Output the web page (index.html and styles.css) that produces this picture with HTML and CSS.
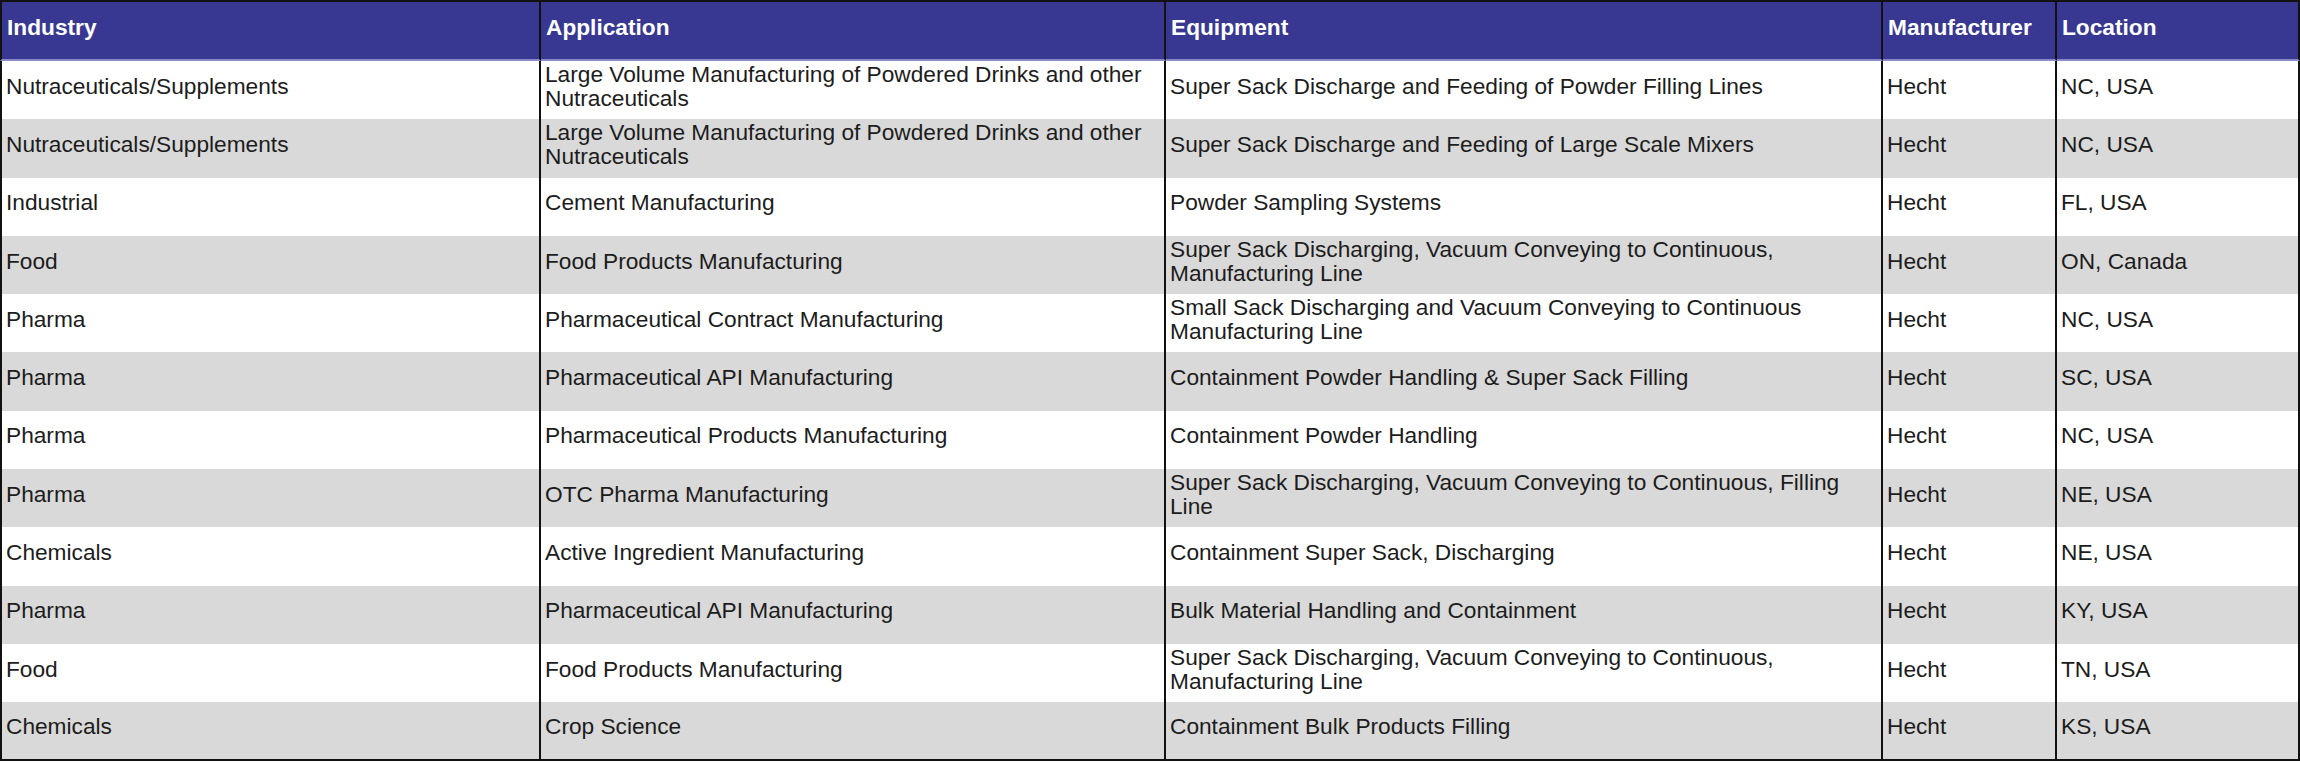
FILE: index.html
```html
<!DOCTYPE html>
<html lang="en">
<head>
<meta charset="utf-8">
<title>Hecht Installations</title>
<link rel="stylesheet" href="styles.css">
</head>
<body>
<table class="installs">
  <colgroup>
    <col class="c-industry">
    <col class="c-application">
    <col class="c-equipment">
    <col class="c-manufacturer">
    <col class="c-location">
  </colgroup>
  <thead>
    <tr>
      <th>Industry</th>
      <th>Application</th>
      <th>Equipment</th>
      <th>Manufacturer</th>
      <th>Location</th>
    </tr>
  </thead>
  <tbody>
    <tr>
      <td>Nutraceuticals/Supplements</td>
      <td>Large Volume Manufacturing of Powdered Drinks and other Nutraceuticals</td>
      <td>Super Sack Discharge and Feeding of Powder Filling Lines</td>
      <td>Hecht</td>
      <td>NC, USA</td>
    </tr>
    <tr>
      <td>Nutraceuticals/Supplements</td>
      <td>Large Volume Manufacturing of Powdered Drinks and other Nutraceuticals</td>
      <td>Super Sack Discharge and Feeding of Large Scale Mixers</td>
      <td>Hecht</td>
      <td>NC, USA</td>
    </tr>
    <tr>
      <td>Industrial</td>
      <td>Cement Manufacturing</td>
      <td>Powder Sampling Systems</td>
      <td>Hecht</td>
      <td>FL, USA</td>
    </tr>
    <tr>
      <td>Food</td>
      <td>Food Products Manufacturing</td>
      <td>Super Sack Discharging, Vacuum Conveying to Continuous, Manufacturing Line</td>
      <td>Hecht</td>
      <td>ON, Canada</td>
    </tr>
    <tr>
      <td>Pharma</td>
      <td>Pharmaceutical Contract Manufacturing</td>
      <td>Small Sack Discharging and Vacuum Conveying to Continuous Manufacturing Line</td>
      <td>Hecht</td>
      <td>NC, USA</td>
    </tr>
    <tr>
      <td>Pharma</td>
      <td>Pharmaceutical API Manufacturing</td>
      <td>Containment Powder Handling &amp; Super Sack Filling</td>
      <td>Hecht</td>
      <td>SC, USA</td>
    </tr>
    <tr>
      <td>Pharma</td>
      <td>Pharmaceutical Products Manufacturing</td>
      <td>Containment Powder Handling</td>
      <td>Hecht</td>
      <td>NC, USA</td>
    </tr>
    <tr>
      <td>Pharma</td>
      <td>OTC Pharma Manufacturing</td>
      <td>Super Sack Discharging, Vacuum Conveying to Continuous, Filling Line</td>
      <td>Hecht</td>
      <td>NE, USA</td>
    </tr>
    <tr>
      <td>Chemicals</td>
      <td>Active Ingredient Manufacturing</td>
      <td>Containment Super Sack, Discharging</td>
      <td>Hecht</td>
      <td>NE, USA</td>
    </tr>
    <tr>
      <td>Pharma</td>
      <td>Pharmaceutical API Manufacturing</td>
      <td>Bulk Material Handling and Containment</td>
      <td>Hecht</td>
      <td>KY, USA</td>
    </tr>
    <tr>
      <td>Food</td>
      <td>Food Products Manufacturing</td>
      <td>Super Sack Discharging, Vacuum Conveying to Continuous, Manufacturing Line</td>
      <td>Hecht</td>
      <td>TN, USA</td>
    </tr>
    <tr>
      <td>Chemicals</td>
      <td>Crop Science</td>
      <td>Containment Bulk Products Filling</td>
      <td>Hecht</td>
      <td>KS, USA</td>
    </tr>
  </tbody>
</table>
</body>
</html>
```

FILE: styles.css
```css
html, body {
  margin: 0;
  padding: 0;
  background: #ffffff;
}

.installs {
  width: 2300px;
  table-layout: fixed;
  border-collapse: separate;
  border-spacing: 0;
  font-family: "Liberation Sans", Arial, Helvetica, sans-serif;
  font-size: 22.7px;
  line-height: 24px;
  color: #1c1c1c;
}

.c-industry { width: 541px; }
.c-application { width: 625px; }
.c-equipment { width: 717px; }
.c-manufacturer { width: 174px; }
.c-location { width: 243px; }

.installs th,
.installs td {
  box-sizing: border-box;
  border-right: 2px solid #111111;
  text-align: left;
  overflow: hidden;
}

.installs th:first-child,
.installs td:first-child {
  border-left: 2px solid #111111;
}

.installs thead th {
  height: 61px;
  background: #383892;
  color: #ffffff;
  font-weight: bold;
  vertical-align: top;
  padding: 13px 5px 0 5px;
  border-top: 2px solid #111111;
  border-bottom: 2px solid #8a8ac8;
}

.installs tbody tr {
  height: 58.3px;
}

.installs tbody td {
  vertical-align: middle;
  padding: 0 5px 9px 4px;
  background: #ffffff;
}

.installs tbody tr:nth-child(even) td {
  background: #d9d9d9;
}

.installs tbody tr:last-child td {
  border-bottom: 2px solid #111111;
}
```
